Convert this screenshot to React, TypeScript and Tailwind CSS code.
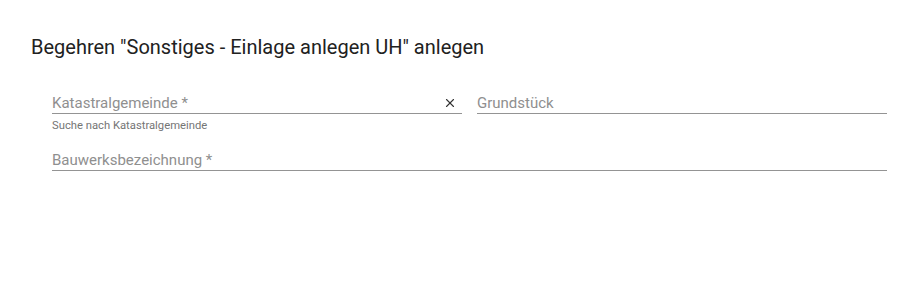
import { X } from "lucide-react";

function Field({
  label,
  hint,
  clearable,
}: {
  label: string;
  hint?: string;
  clearable?: boolean;
}) {
  return (
    <div className="flex-1 min-w-0">
      <div className="flex items-end h-[26px] border-b border-[#949494]">
        <span className="flex-1 text-[15px] leading-[20px] text-[#8f8f8f]">{label}</span>
        {clearable && (
          <X className="w-[14px] h-[14px] mb-[3px] mr-[5px] text-[#333]" strokeWidth={1.9} />
        )}
      </div>
      {hint && <p className="text-[11.25px] leading-[14px] mt-[5px] text-[#757575]">{hint}</p>}
    </div>
  );
}

export default function App() {
  return (
    <div className="w-[906px] h-[305px] bg-white font-['Roboto',sans-serif]">
      <h2 className="pt-[35px] pl-[31px] text-[20px] leading-[24px] text-[#212121]">
        Begehren "Sonstiges - Einlage anlegen UH" anlegen
      </h2>
      <div className="pl-[52px] pr-[19px] pt-[29px] flex flex-col gap-[12px]">
        <div className="flex gap-[15px] items-start">
          <Field label="Katastralgemeinde *" hint="Suche nach Katastralgemeinde" clearable />
          <Field label="Grundstück" />
        </div>
        <Field label="Bauwerksbezeichnung *" />
      </div>
    </div>
  );
}
